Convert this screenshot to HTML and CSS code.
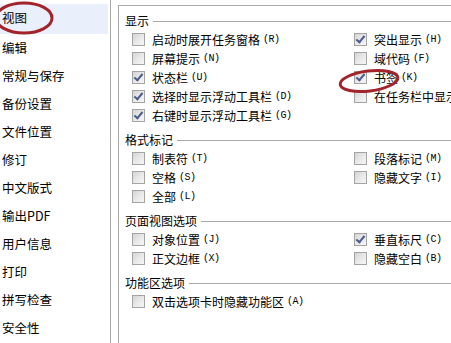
FILE: index.html
```html
<!DOCTYPE html>
<html lang="zh-CN">
<head>
<meta charset="utf-8">
<title>选项 - 视图</title>
<link rel="stylesheet" href="styles.css">
</head>
<body>
<div class="app">
  <ul class="nav">
    <li class="nav-item selected">视图</li>
    <li class="nav-item">编辑</li>
    <li class="nav-item">常规与保存</li>
    <li class="nav-item">备份设置</li>
    <li class="nav-item">文件位置</li>
    <li class="nav-item">修订</li>
    <li class="nav-item">中文版式</li>
    <li class="nav-item">输出PDF</li>
    <li class="nav-item">用户信息</li>
    <li class="nav-item">打印</li>
    <li class="nav-item">拼写检查</li>
    <li class="nav-item">安全性</li>
  </ul>
  <div class="panel">
    <section class="group">
      <div class="group-title"><span>显示</span></div>
      <div class="rows">
        <label class="opt"><span class="cb"></span>启动时展开任务窗格<span class="key">(R)</span></label>
        <label class="opt"><span class="cb on"></span>突出显示<span class="key">(H)</span></label>
        <label class="opt"><span class="cb"></span>屏幕提示<span class="key">(N)</span></label>
        <label class="opt"><span class="cb"></span>域代码<span class="key">(F)</span></label>
        <label class="opt"><span class="cb on"></span>状态栏<span class="key">(U)</span></label>
        <label class="opt"><span class="cb on"></span>书签<span class="key">(K)</span></label>
        <label class="opt"><span class="cb on"></span>选择时显示浮动工具栏<span class="key">(D)</span></label>
        <label class="opt"><span class="cb"></span>在任务栏中显示所有窗口<span class="key">(W)</span></label>
        <label class="opt"><span class="cb on"></span>右键时显示浮动工具栏<span class="key">(G)</span></label>
      </div>
    </section>
    <section class="group">
      <div class="group-title"><span>格式标记</span></div>
      <div class="rows">
        <label class="opt"><span class="cb"></span>制表符<span class="key">(T)</span></label>
        <label class="opt"><span class="cb"></span>段落标记<span class="key">(M)</span></label>
        <label class="opt"><span class="cb"></span>空格<span class="key">(S)</span></label>
        <label class="opt"><span class="cb"></span>隐藏文字<span class="key">(I)</span></label>
        <label class="opt"><span class="cb"></span>全部<span class="key">(L)</span></label>
      </div>
    </section>
    <section class="group">
      <div class="group-title"><span>页面视图选项</span></div>
      <div class="rows">
        <label class="opt"><span class="cb"></span>对象位置<span class="key">(J)</span></label>
        <label class="opt"><span class="cb on"></span>垂直标尺<span class="key">(C)</span></label>
        <label class="opt"><span class="cb"></span>正文边框<span class="key">(X)</span></label>
        <label class="opt"><span class="cb"></span>隐藏空白<span class="key">(B)</span></label>
      </div>
    </section>
    <section class="group">
      <div class="group-title"><span>功能区选项</span></div>
      <div class="rows">
        <label class="opt"><span class="cb"></span>双击选项卡时隐藏功能区<span class="key">(A)</span></label>
      </div>
    </section>
  </div>
  <svg class="marks" width="451" height="343" viewBox="0 0 451 343" aria-hidden="true">
    <ellipse cx="24" cy="18" rx="28" ry="15" fill="none" stroke="#a3232b" stroke-width="3"/>
    <ellipse cx="369" cy="81" rx="29" ry="10" transform="rotate(-7 369 81)" fill="none" stroke="#a3232b" stroke-width="3"/>
  </svg>
</div>
</body>
</html>
```
FILE: styles.css
```css
html, body {
  margin: 0;
  padding: 0;
  background: #ffffff;
}
body {
  font-family: "Noto Sans CJK SC", "Noto Sans", sans-serif;
  font-size: 12px;
  color: #000;
  overflow: hidden;
}
.app {
  position: relative;
  display: flex;
  gap: 7px;
  width: 451px;
  height: 343px;
  overflow: hidden;
}
.nav {
  list-style: none;
  margin: 0;
  padding: 4px 0 0 0;
  width: 110px;
  flex: none;
  border-right: 1px solid #a9a9a9;
  background: #fff;
}
.nav-item {
  height: 28px;
  line-height: 28px;
  padding-left: 2px;
  white-space: nowrap;
  font-size: 12.5px;
}
.nav-item:first-child {
  height: 30px;
  line-height: 28px;
}
.nav-item.selected {
  background: #eaf0fb;
  margin-right: 2px;
}
.panel {
  flex: 1;
  margin-top: 5px;
  border-top: 1px solid #a9a9a9;
  border-left: 1px solid #a9a9a9;
  padding: 5px 0 0 6px;
  display: flex;
  flex-direction: column;
  gap: 5px;
  min-width: 0;
}
.group-title {
  height: 19px;
  display: flex;
  align-items: center;
  gap: 4px;
  white-space: nowrap;
}
.group-title::after {
  content: "";
  flex: 1;
  border-top: 1px solid #a8a8a8;
  margin-top: 1px;
}
.rows {
  display: grid;
  grid-template-columns: 222px 222px;
  padding-left: 7px;
}
.opt {
  height: 19px;
  display: flex;
  align-items: center;
  white-space: nowrap;
  overflow: hidden;
}
.key {
  font-family: "Liberation Mono", "DejaVu Sans Mono", monospace;
  font-size: 10px;
  margin-left: 3px;
  letter-spacing: -0.5px;
}
.cb {
  flex: none;
  width: 11px;
  height: 11px;
  margin-right: 7px;
  border: 1px solid #a4a4a4;
  background: linear-gradient(135deg, #d4d4d4 0%, #e8e8e8 50%, #f6f6f6 100%);
  position: relative;
}
.cb.on::after {
  content: "";
  position: absolute;
  left: 3px;
  top: 0px;
  width: 3px;
  height: 7px;
  border-right: 2px solid #4b5c8c;
  border-bottom: 2px solid #4b5c8c;
  transform: rotate(40deg);
}
.marks {
  position: absolute;
  left: 0;
  top: 0;
  pointer-events: none;
}
```
